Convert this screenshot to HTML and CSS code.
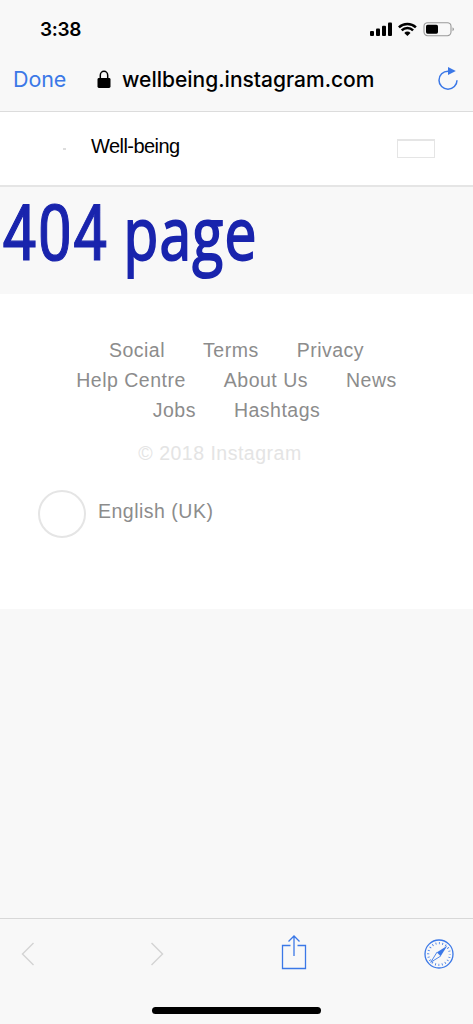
FILE: index.html
```
<!DOCTYPE html>
<html lang="en-GB">
<head>
<meta charset="utf-8">
<meta name="viewport" content="width=device-width, initial-scale=1">
<title>Well-being</title>
<link rel="stylesheet" href="styles.css">
</head>
<body>
<div class="screen">
  <div class="status">
    <span class="time">3:38</span>
    <svg class="status-icons" width="88" height="18" viewBox="0 0 88 18">
      <g fill="#000">
        <rect x="2" y="11" width="4" height="5" rx="1"/>
        <rect x="8" y="8.6" width="4" height="7.4" rx="1"/>
        <rect x="14" y="5.8" width="4" height="10.2" rx="1"/>
        <rect x="20" y="2.6" width="4" height="13.4" rx="1"/>
        <path d="M36.300 12.900a4.300 4.300 0 0 1 6.200 0L39.400 16z"/>
      </g>
      <g fill="none" stroke="#000" stroke-width="2.500">
        <path d="M30.900 7.300a12.300 12.300 0 0 1 17 0"/>
        <path d="M33.700 10.300a8.200 8.200 0 0 1 11.400 0"/>
      </g>
      <rect x="56" y="2.700" width="27" height="13" rx="3.600" fill="none" stroke="#999" stroke-width="1.100"/>
      <rect x="58" y="4.700" width="12" height="9" rx="1.600" fill="#000"/>
      <path d="M84.500 7.200q3 2 0 4z" fill="#999"/>
    </svg>
  </div>
  <div class="address">
    <span class="done">Done</span>
    <svg class="lock" width="14" height="19" viewBox="0 0 14 19">
      <path d="M3.300 9V5.200a3.700 3.900 0 0 1 7.400 0V9" fill="none" stroke="#000" stroke-width="1.500"/>
      <rect x=".5" y="8" width="13" height="10" rx="1.400" fill="#000"/>
    </svg>
    <span class="url">wellbeing.instagram.com</span>
    <svg class="reload" width="22" height="24" viewBox="0 0 22 24">
      <path d="M20 13.200A9 9 0 1 1 11 4.200h1" fill="none" stroke="#3b78e7" stroke-width="1.500"/>
      <path d="M11 0l7.800 4-7.800 4z" fill="#3b78e7"/>
    </svg>
  </div>
  <header class="site">
    <i class="speck"></i>
    <span class="brand">Well-being</span>
    <i class="menu"></i>
  </header>
  <section class="hero"><h1><span class="code">404</span> <span class="word">page</span></h1></section>
  <footer class="footer">
    <nav>
      <div class="row"><a>Social</a><a>Terms</a><a>Privacy</a></div>
      <div class="row"><a>Help Centre</a><a>About Us</a><a>News</a></div>
      <div class="row"><a>Jobs</a><a>Hashtags</a></div>
    </nav>
    <div class="copyright">© 2018 Instagram</div>
    <div class="language"><i class="ring"></i><span>English (UK)</span></div>
  </footer>
  <div class="empty"></div>
  <div class="toolbar">
    <div class="tools">
      <svg width="14" height="24" viewBox="0 0 14 24"><path d="M12.500 1L1.500 12l11 11" fill="none" stroke="#d3d3d3" stroke-width="1.400"/></svg>
      <svg width="14" height="24" viewBox="0 0 14 24"><path d="M1.500 1l11 11-11 11" fill="none" stroke="#d3d3d3" stroke-width="1.400"/></svg>
      <svg width="26" height="36" viewBox="0 0 26 36"><path d="M9.500 11.500h-8v23h23v-23h-8M13 22V2M7.500 7.500L13 2l5.500 5.500" fill="none" stroke="#3b78e7" stroke-width="1.300"/></svg>
      <svg width="30" height="30" viewBox="0 0 30 30">
        <circle cx="15" cy="15" r="14" fill="none" stroke="#3b78e7" stroke-width="1.300"/>
        <circle cx="15" cy="15" r="10.800" fill="none" stroke="#3b78e7" stroke-width="2.200" stroke-dasharray=".8 2.593" stroke-dashoffset=".4"/>
        <path d="M23.300 6.700L16.800 17 13 13.200z" fill="#3b78e7"/>
        <path d="M13 13.200L16.800 17 6.700 23.300z" fill="#f8f8f8" stroke="#3b78e7" stroke-width=".9"/>
      </svg>
    </div>
    <div class="home"></div>
  </div>
</div>
</body>
</html>
```
FILE: styles.css
```
* { box-sizing: border-box; }
body { margin: 0; background: #f8f8f8; font-family: "Liberation Sans", sans-serif; }
svg, i { display: block; flex: none; }
.screen { width: 473px; height: 1024px; display: flex; flex-direction: column; overflow: hidden; white-space: nowrap; }
.status { height: 58px; padding: 20px 17px 0 40px; display: flex; justify-content: space-between; align-items: flex-start; }
.time { font: 600 19px/20px Inter, sans-serif; letter-spacing: -0.3px; }
.address { height: 54px; padding: 0 14px 10px 13px; display: flex; align-items: center; border-bottom: 1px solid #dcdcdc; }
.done { width: 84px; font: 400 21.500px/24px Inter, sans-serif; letter-spacing: -0.1px; margin-top: -1px; color: #3b78e7; }
.lock { margin-top: -1px; }
.url { margin-left: 11px; font: 500 21px/24px Inter, sans-serif; letter-spacing: 0; }
.reload { margin-left: auto; margin-top: -1px; }
.site { height: 75px; padding-left: 63px; display: flex; align-items: center; background: #fff; border-bottom: 2px solid #e5e5e5; }
.speck { width: 3px; height: 2px; background: #ddd; }
.brand { margin: -5px 0 0 25px; font-size: 20px; letter-spacing: -0.55px; }
.menu { width: 38px; height: 19px; margin-left: auto; margin-right: 38px; border: 1px solid #e5e5e5; border-top-width: 2px; }
.hero { height: 107px; }
h1 { margin: -2px 0 0; padding-left: 3px; font: 400 78px/93px Roboto, sans-serif; color: #1924ad; -webkit-text-stroke: 1.200px #1924ad; transform: scaleX(.78); transform-origin: 0 0; }
.code { letter-spacing: 1.500px; }
.word { font: 400 73px/93px "Open Sans", sans-serif; letter-spacing: 1.500px; -webkit-text-stroke-width: 2px; }
.footer { height: 315px; padding: 41px 0 0; background: #fff; color: #8c8c8c; font-size: 19.500px; letter-spacing: .5px; }
.row { height: 30px; line-height: 30px; display: flex; justify-content: center; gap: 38px; }
.copyright { margin: 13px 33px 0 0; line-height: 30px; text-align: center; color: #e4e4e4; letter-spacing: .5px; }
.language { display: flex; align-items: center; padding: 22px 0 0 38px; }
.ring { width: 48px; height: 48px; border: 2px solid #e5e5e5; border-radius: 50%; }
.language span { margin: -5px 0 0 12px; }
.empty { flex: 1; }
.toolbar { height: 106px; border-top: 1px solid #d8d8d8; }
.tools { height: 70px; padding: 0 18px 0 21px; display: grid; grid-template-columns: 129px 131px 143px 30px; align-items: center; }
.tools svg:nth-child(3) { margin-top: -4px; }
.home { width: 169px; height: 7px; margin: 18px auto 0; border-radius: 4px; background: #000; }
```
